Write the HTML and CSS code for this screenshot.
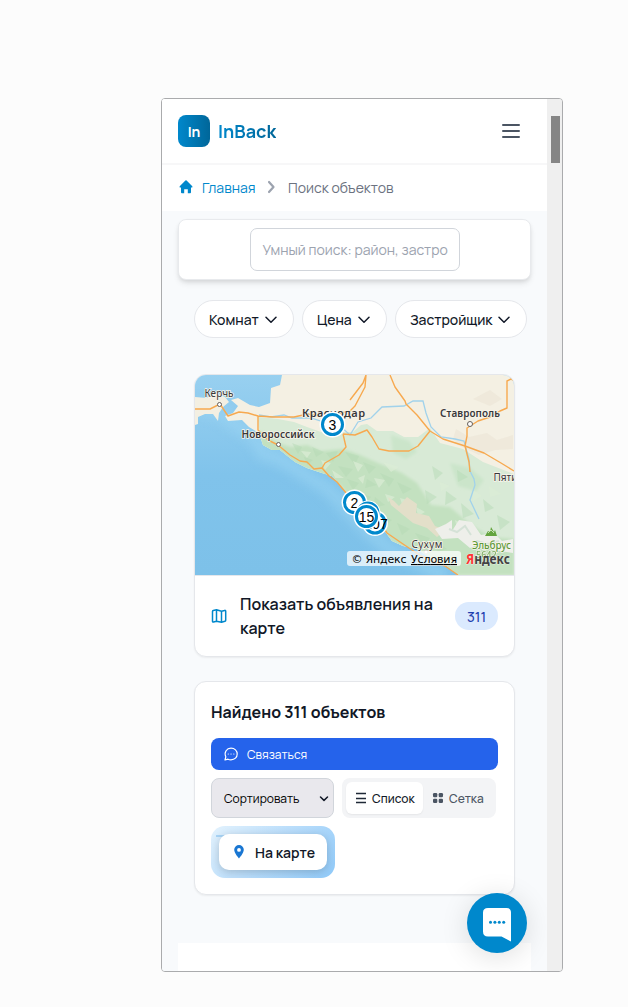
FILE: index.html
```html
<!DOCTYPE html>
<html lang="ru">
<head>
<meta charset="utf-8">
<title>InBack</title>
<link rel="stylesheet" href="styles.css">
</head>
<body>
<div class="device">
  <div class="screen">
    <header class="header">
      <div class="brand"><span class="logo">In</span><span class="brand-name">InBack</span></div>
      <svg class="burger" width="24" height="24" viewBox="0 0 24 24"><path d="M4 6h16M4 12h16M4 18h16"/></svg>
    </header>
    <nav class="crumbs">
      <svg class="home" width="16" height="16" viewBox="0 0 16 16"><path d="M8 1.200Q8.300 1.200 8.600 1.500L14.300 7.200Q14.900 8.300 13.900 8.600H13V13.300Q13 14.200 12.100 14.200H9.800V10.200H6.200V14.200H3.900Q3 14.200 3 13.300V8.600H2.100Q1.100 8.300 1.700 7.200L7.400 1.500Q7.700 1.200 8 1.200Z"/></svg>
      <a class="crumb-link">Главная</a>
      <svg class="crumb-arrow" width="12" height="14" viewBox="0 0 12 14"><path d="m4 2 4.500 5-4.500 5"/></svg>
      <span class="crumb-now">Поиск объектов</span>
    </nav>
    <main class="content">
      <section class="search"><div class="search-input">Умный поиск: район, застро</div></section>
      <div class="filters">
        <button class="chip rooms"><span>Комнат</span><svg class="chev" width="12" height="8" viewBox="0 0 12 8"><path d="m1 1.300 5 5 5-5"/></svg></button>
        <button class="chip price"><span>Цена</span><svg class="chev" width="12" height="8" viewBox="0 0 12 8"><path d="m1 1.300 5 5 5-5"/></svg></button>
        <button class="chip builder"><span>Застройщик</span><svg class="chev" width="12" height="8" viewBox="0 0 12 8"><path d="m1 1.300 5 5 5-5"/></svg></button>
      </div>
      <section class="card map-card">
        <svg class="map" width="319" height="200" viewBox="0 0 319 200">
          <defs>
            <linearGradient id="sea" x1="0" y1="0" x2="0" y2="1"><stop offset="0" stop-color="#98d0f0"/><stop offset=".5" stop-color="#80c3eb"/><stop offset="1" stop-color="#7dc1e9"/></linearGradient>
            <clipPath id="coast"><path d="M87 0H319V200H263L252 191 237 184 222 174 208 171 197 166 189 155 176 146 164 131 152 119 145 110 137 101 127 98 112 93 100 87 85 75 77 75 68 70 64 58 54 52 47 45 33 46 30 41 38 38 43 31 36 25 43 23 55 30 64 32 75 28 76 13 85 10Z"/></clipPath>
            <filter id="soft" x="-20%" y="-20%" width="140%" height="140%"><feGaussianBlur stdDeviation="5"/></filter>
            <filter id="blend" x="-5%" y="-5%" width="110%" height="110%"><feGaussianBlur stdDeviation="1.500"/></filter>
          </defs>
          <rect width="319" height="200" fill="url(#sea)"/>
          <path d="M0 31 26 38 38 48 60 62 68 78 85 84 115 103 132 113 152 134 176 158 198 177 221 185 251 202" fill="none" stroke="#9bd5f3" stroke-width="16" opacity=".5" filter="url(#soft)"/>
          <path d="M87 0H319V200H263L252 191 237 184 222 174 208 171 197 166 189 155 176 146 164 131 152 119 145 110 137 101 127 98 112 93 100 87 85 75 77 75 68 70 64 58 54 52 47 45 33 46 30 41 38 38 43 31 36 25 43 23 55 30 64 32 75 28 76 13 85 10Z" fill="#f4f0e3"/>
          <path d="M0 22 12 23 19 17 30 22 34 27 28 32 24 38 23 46 18 39 10 39 3 42 3 49 0 50Z" fill="#f3efe2"/>
          <g clip-path="url(#coast)">
            <path d="M63 42 83 44 99 47 112 52 126 57 146 57 158 57 166 50 172 49 182 56 198 56 209 62 223 62 235 53 245 68 268 74 288 87 319 99V200H263L226 180 190 165 145 110 100 90 66 73Z" fill="#d8ead6"/>
            <g filter="url(#blend)">
              <path d="M65 56 83 68 96 72 112 70 126 76 148 74 165 80 183 88 207 98 222 108 236 130 255 132 276 150 296 162 319 164V200H263L226 180 190 165 145 110 100 90 66 73Z" fill="#c3e1c0"/>
              <path d="M196 60 214 66 222 77 211 84 198 78ZM255 88 275 93 289 105 281 116 263 111Z" fill="#cbe5ca"/>
            </g>
            <g fill="#b4dab3" opacity=".45">
              <path d="M97 68 107 72 103 79ZM117 72 129 77 121 82ZM131 78 143 76 138 87ZM109 82 118 85 112 90ZM143 91 158 94 151 102ZM150 77 164 81 160 90ZM168 87 181 92 174 99ZM152 104 164 108 158 115ZM172 104 182 110 170 113ZM185 98 199 104 194 112ZM202 107 217 114 208 119ZM164 117 176 122 170 129ZM180 122 190 130 178 133ZM184 139 197 145 191 150ZM202 148 215 154 207 160ZM220 158 235 163 229 171ZM240 165 252 174 242 177ZM230 115 242 122 232 129ZM251 116 262 124 250 130ZM266 128 279 139 268 143ZM288 124 299 133 290 137ZM302 140 315 147 305 155ZM237 91 248 98 240 105ZM262 95 273 102 263 107Z"/>
            </g>
            <g fill="#dcedd5" opacity=".7">
              <path d="M106 76 116 77 112 83ZM126 85 136 88 130 95ZM137 95 149 103 140 103ZM158 86 168 90 163 97ZM163 103 170 100 168 109ZM188 87 204 92 196 97ZM179 103 190 105 184 113ZM205 123 216 126 208 132ZM190 119 200 122 193 127ZM221 132 230 137 223 141ZM245 107 255 111 246 116ZM278 115 287 121 278 126ZM294 111 306 119 295 122ZM260 145 270 150 262 154Z"/>
            </g>
            <path d="M278 24 295 15 307 24 295 31ZM261 54 274 62 292 58 302 65 318 60V74L300 75 284 80 263 70 258 64Z" fill="#ebe5d6" opacity=".6"/>
            <path d="M193 122 199 126 204 131 212 122 222 129 221 138 234 141 240 151 250 155 242 162 232 153 218 148 207 139 196 130Z" fill="#e3dfc9"/>
            <path d="M240 154 251 149 257 145 257 156 264 145 277 147 286 160 299 158 307 166 318 164V178L298 175 289 167 275 173 263 163 247 164Z" fill="#eeefea"/>
            <path d="M254 154 262 157 270 151 276 160M281 166 293 169 304 166" stroke="#d5e2d7" stroke-width="2" fill="none"/>
          </g>
          <g fill="none" stroke="#a1d2eb" stroke-width="1.300">
            <path d="M64 40 76 42 89 40 97 43 116 43 129 47 144 50 155 60 163 47 176 43 187 32 209 31 218 26 228 26 231 38 236 52 246 62 260 64 269 66 274 84 275 96 279 104 280 110 275 125 284 144"/>
          </g>
          <g fill="none" stroke="#f7a94f" stroke-width="1.400" stroke-linejoin="round">
            <path d="M0 34 15 34 25 29 33 41 44 37 53 38 63 41 78 42 99 42 113 39 125 41 142 39 155 36 160 31 170 12 171 0M155 25 168 8 171 0M195 0 200 12 210 26 211 29 222 40 235 56 248 64 270 71 289 78 306 88 319 96M63 41 63 55 73 65 83 70 95 80 105 86 112 87 119 94 127 93 134 101 142 107 152 119 158 129 169 137 184 146 192 158 208 169 226 181 250 191 263 200"/>
            <path d="M148 59 160 60 172 55 177 62 184 74 194 76 214 76 223 71 235 56M127 93 130 88 144 80 151 72 148 59M270 71 272 61 272 53 283 46 295 42 305 36 312 33 312 6 316 4 319 6M270 71 274 87 275 97"/>
          </g>
          <g class="cities">
            <text x="9.500" y="22" textLength="29" class="town">Керчь</text>
            <text x="46.500" y="63" textLength="73">Новороссийск</text>
            <text x="107" y="42" textLength="63" class="big">Краснодар</text>
            <text x="245" y="42" textLength="60">Ставрополь</text>
            <text x="298.500" y="106" class="town">Пяти</text>
            <text x="216.500" y="172.500" textLength="31" class="town">Сухум</text>
            <text x="277" y="174" textLength="39" class="peak">Эльбрус</text>
            <text x="281" y="183" class="peak height">5642</text>
          </g>
          <g fill="#fff" stroke="#66605b"><circle cx="24.500" cy="29.500" r="2"/><circle cx="83.500" cy="69.500" r="2"/><circle cx="275" cy="49" r="2.500"/><circle cx="231" cy="177" r="2" stroke="#c9c5be"/></g>
          <path d="m290 161 3-5 2 1 1-5 3 5 1-2 2 6Z" fill="#64a43f"/><path d="m293 158 3-3 3 3" stroke="#c8e1b5" fill="none"/>
          <g class="markers">
            <circle cx="137.500" cy="49.500" r="13" class="halo"/><circle cx="137.500" cy="49.500" r="10" class="marker"/><text x="137.500" y="55">3</text>
            <circle cx="159.500" cy="127.500" r="13" class="halo"/><circle cx="159.500" cy="127.500" r="10" class="marker"/><text x="159.500" y="132.500">2</text>
            <circle cx="180" cy="148" r="13" class="halo"/><circle cx="180" cy="148" r="10" class="marker"/><text x="181" y="153.500">107</text>
            <circle cx="173" cy="138" r="12.500" class="halo"/><circle cx="173" cy="138" r="10" class="marker"/>
            <circle cx="171.500" cy="141.500" r="13" class="halo"/><circle cx="171.500" cy="141.500" r="10" class="marker"/><text x="171.500" y="147">15</text>
          </g>
          <rect x="152" y="176" width="114" height="15" rx="3" fill="#fff" opacity=".72"/>
          <g class="copyright"><text x="156.500" y="188" textLength="55">© Яндекс</text><text x="216" y="188" textLength="46" class="terms">Условия</text></g>
          <text class="yandex" x="271" y="188.500" textLength="44" lengthAdjust="spacingAndGlyphs"><tspan fill="#f33">Я</tspan>ндекс</text>
        </svg>
        <div class="map-footer">
          <svg class="map-icon" width="16" height="16" viewBox="0 0 16 16"><path d="M5.500 13.200 2.500 14Q1.500 14.200 1.500 13.200V3.500Q1.500 2.700 2.300 2.500L5.500 1.800 10.500 3.200 13.700 2.400Q14.700 2.200 14.700 3.200V12.300Q14.700 13.100 13.900 13.300L10.500 14.200 5.500 13.200V1.800M10.500 3.200V14.200"/></svg>
          <span class="map-label">Показать объявления на карте</span>
          <span class="count">311</span>
        </div>
      </section>
      <section class="card results">
        <h2 class="results-title">Найдено 311 объектов</h2>
        <button class="contact"><svg width="16" height="16" viewBox="0 0 16 16"><path d="M2 14 2.800 10.800C.8 6.200 3.800 2.200 8 2.200 11.700 2.200 14.200 4.600 14.200 8S11.700 13.800 8 13.800Q6.200 13.800 5 13.200L2 14Z"/><path d="M5.200 8h.1M8 8h.1M10.800 8h.1"/></svg><span>Связаться</span></button>
        <div class="tools">
          <div class="select"><span>Сортировать</span><svg class="chev" width="10" height="8" viewBox="0 0 10 8"><path d="m1.500 3 3.500 3.400 3.500-3.400"/></svg></div>
          <div class="views">
            <div class="view view-on"><svg width="12" height="12" viewBox="0 0 12 12"><path d="M1 1.500h10M1 6.500h10M1 10.500h10"/></svg><span>Список</span></div>
            <div class="view"><svg width="12" height="12" viewBox="0 0 12 12"><rect x="1" y="1" width="4.300" height="4.300" rx="1.200"/><rect x="6.700" y="1" width="4.300" height="4.300" rx="1.200"/><rect x="1" y="6.700" width="4.300" height="4.300" rx="1.200"/><rect x="6.700" y="6.700" width="4.300" height="4.300" rx="1.200"/></svg><span>Сетка</span></div>
          </div>
        </div>
        <div class="map-button"><div class="map-button-inner"><svg width="12" height="16" viewBox="0 0 12 16"><path fill-rule="evenodd" d="M6 1A4.800 4.800 0 0 0 1.200 5.800C1.200 9.200 6 14.500 6 14.500S10.800 9.200 10.800 5.800A4.800 4.800 0 0 0 6 1ZM6 4A1.900 1.900 0 1 1 6 7.800 1.900 1.900 0 0 1 6 4Z"/></svg><span>На карте</span></div></div>
      </section>
      <div class="next-block"></div>
    </main>
    <div class="chat"><svg width="60" height="60" viewBox="0 0 60 60"><path d="M21 15H39.500Q44 15 44 19.500V48.500L34.500 43.500H21Q16 43.500 16 38.500V19.500Q16 15 21 15Z" fill="#fff"/><g fill="#08c"><circle cx="23.500" cy="29.300" r="1.500"/><circle cx="27.900" cy="29.300" r="1.500"/><circle cx="32.300" cy="29.300" r="1.500"/><circle cx="36.700" cy="29.300" r="1.500"/></g></svg></div>
  </div>
  <div class="scrollbar"><div class="thumb"></div></div>
</div>
</body>
</html>
```
FILE: styles.css
```css
* { box-sizing: border-box; }
body { margin: 0; padding: 98px 65px 35px 161px; height: 1007px; overflow: hidden; background: #fcfcfc; font-family: Manrope, Inter, "Noto Sans", sans-serif; color: #111827; }
button { font: inherit; border: 0; padding: 0; }
svg { display: block; flex: none; }
span, a { white-space: nowrap; }
.device { width: 402px; height: 874px; border: 1px solid #aaabad; border-radius: 4px; overflow: hidden; display: flex; background: #f9fafb; }
.screen { position: relative; width: 385px; height: 872px; overflow: hidden; background: #f8fafc; }
.scrollbar { width: 15px; padding: 17px 2px 0 4px; background: #efefef; }
.thumb { height: 47px; background: #858585; }
.header { height: 66px; padding: 0 24px 0 16px; display: flex; align-items: center; justify-content: space-between; background: #fff; border-bottom: 2px solid #f7f7f8; }
.brand { display: flex; align-items: center; gap: 8px; }
.logo { width: 32px; height: 32px; border-radius: 8px; background: linear-gradient(90deg, #0088cc, #006699); color: #fff; font-size: 14px; font-weight: 700; line-height: 34px; text-align: center; letter-spacing: -.2px; }
.brand-name { font-size: 18px; line-height: 28px; font-weight: 700; background: linear-gradient(90deg, #0088cc, #006699); background-clip: text; color: transparent; }
.burger { fill: none; stroke: #4b5563; stroke-width: 2; stroke-linecap: round; }
.crumbs { height: 46px; padding: 0 16px 1px; display: flex; align-items: center; background: #fff; font-size: 14px; }
.home { fill: #0088cc; margin-top: -1px; }
.crumb-link { color: #0088cc; margin-left: 8px; width: 54px; }
.crumb-arrow { margin: -1px 11px 0 9px; fill: none; stroke: #9ca3af; stroke-width: 2.2; stroke-linecap: round; stroke-linejoin: round; }
.crumb-now { color: #6b7280; }
.content { padding: 8px 16px 0; }
.search { width: 353px; height: 61px; padding-top: 8px; border: 1px solid #e8eaed; border-radius: 8px; background: #fff; box-shadow: 0 4px 6px -1px rgb(0 0 0 / 10%), 0 2px 4px -1px rgb(0 0 0 / 8%); }
.search-input { width: 210px; height: 43px; margin: 0 auto; padding: 0 12px; border: 1px solid #d1d5db; border-radius: 7px; overflow: hidden; color: #9ca3af; font-size: 14px; line-height: 42px; white-space: nowrap; }
.filters { display: flex; gap: 8px; margin: 20px 0 0 16px; }
.chip { height: 38px; flex: none; border: 1px solid #e5e7eb; border-radius: 19px; background: #fff; color: #111827; font-size: 14px; font-weight: 500; display: flex; align-items: center; justify-content: space-between; padding: 1px 16px 0 14px; }
.rooms { width: 100px; }
.price { width: 85px; }
.builder { width: 132px; }
.chev { fill: none; stroke: #111827; stroke-width: 1.5; stroke-linecap: round; stroke-linejoin: round; }
.card { width: 321px; margin-left: 16px; border: 1px solid #e5e7eb; border-radius: 12px; background: #fff; box-shadow: 0 1px 2px rgb(0 0 0 / 6%); overflow: hidden; }
.map-card { height: 283px; margin-top: 36px; }
.map text { font-family: "Noto Sans", sans-serif; }
.cities { font-size: 10px; font-weight: 600; fill: #38383a; stroke: #f8f4ea; stroke-width: 1.5px; paint-order: stroke; }
.cities .town { font-weight: 400; }
.cities .big { font-size: 11px; }
.cities .peak { fill: #5e993b; font-weight: 500; }
.cities .height { font-size: 9px; opacity: .7; }
.halo { fill: #fff; }
.marker { fill: #fff; stroke: #0088cc; stroke-width: 3; }
.markers text { font: 14px "Liberation Sans", Arial, sans-serif; text-anchor: middle; fill: #000; }
.map .copyright text { font: 11px "DejaVu Sans", sans-serif; fill: #000; }
.map .terms { text-decoration: underline; }
.map .yandex { font-size: 14px; font-weight: 700; fill: #444; stroke: #fff; stroke-width: .6px; paint-order: stroke; }
.map-footer { height: 81px; border-top: 1px solid #e5e7eb; padding: 0 16px; display: flex; align-items: center; }
.map-icon { fill: none; stroke: #0088cc; stroke-width: 1.5; stroke-linejoin: round; }
.map-label { width: 211px; margin-left: 13px; font-size: 16px; line-height: 24px; font-weight: 600; white-space: normal; }
.count { width: 43px; height: 28px; margin-left: auto; border-radius: 14px; background: #dbeafe; color: #1e40af; font-size: 14px; font-weight: 500; line-height: 30px; text-align: center; }
.results { height: 214px; margin-top: 24px; padding: 16px 16px 0; }
.results-title { margin: 0 0 12px; font-size: 16px; line-height: 28px; font-weight: 700; }
.contact { width: 287px; height: 32px; border-radius: 8px; background: #2563eb; color: #fff; display: flex; align-items: center; gap: 8px; padding-left: 12px; font-size: 12px; }
.contact svg { fill: none; stroke: #fff; stroke-width: 1.2; stroke-linejoin: round; stroke-linecap: round; }
.tools { display: flex; gap: 8px; margin-top: 8px; }
.select { width: 123px; height: 40px; padding: 0 4px 0 12px; border: 1px solid #d1d5db; border-radius: 8px; background: #e9e8ed; color: #000; display: flex; align-items: center; justify-content: space-between; font-size: 12px; }
.views { width: 154px; height: 40px; padding: 4px; border-radius: 8px; background: #f3f4f6; display: flex; }
.view { width: 69px; height: 32px; padding: 1px 0 0 9px; display: flex; align-items: center; gap: 5px; color: #4b5563; font-size: 12px; font-weight: 500; }
.view svg { fill: #4b5563; stroke: none; margin-top: -2px; }
.view-on { width: 77px; border-radius: 6px; background: #fff; color: #111827; box-shadow: 0 1px 2px rgb(0 0 0 / 6%); }
.view-on svg { stroke: #1f2937; stroke-width: 1.3; }
.map-button { width: 124px; height: 52px; margin-top: 8px; padding: 8px; border-radius: 14px; background: linear-gradient(#a8d4f6, #a8d4f6) 5px 9px / 12px 2px no-repeat, linear-gradient(135deg, #e3f2fd, #bbdefb 45%, #90caf9); }
.map-button-inner { width: 108px; height: 36px; padding: 1px 0 0 14px; border-radius: 10px; background: #fff; box-shadow: 0 2px 8px rgb(0 0 0 / 18%); display: flex; align-items: center; gap: 10px; font-size: 14px; font-weight: 600; }
.map-button-inner svg { fill: #1976d2; margin-top: -2px; }
.next-block { width: 353px; height: 40px; margin-top: 48px; background: #fff; }
.chat { position: absolute; right: 20px; bottom: 18px; width: 60px; height: 60px; border-radius: 50%; background: #0088cc; box-shadow: 0 4px 28px rgb(0 0 0 / 13%); }
```
